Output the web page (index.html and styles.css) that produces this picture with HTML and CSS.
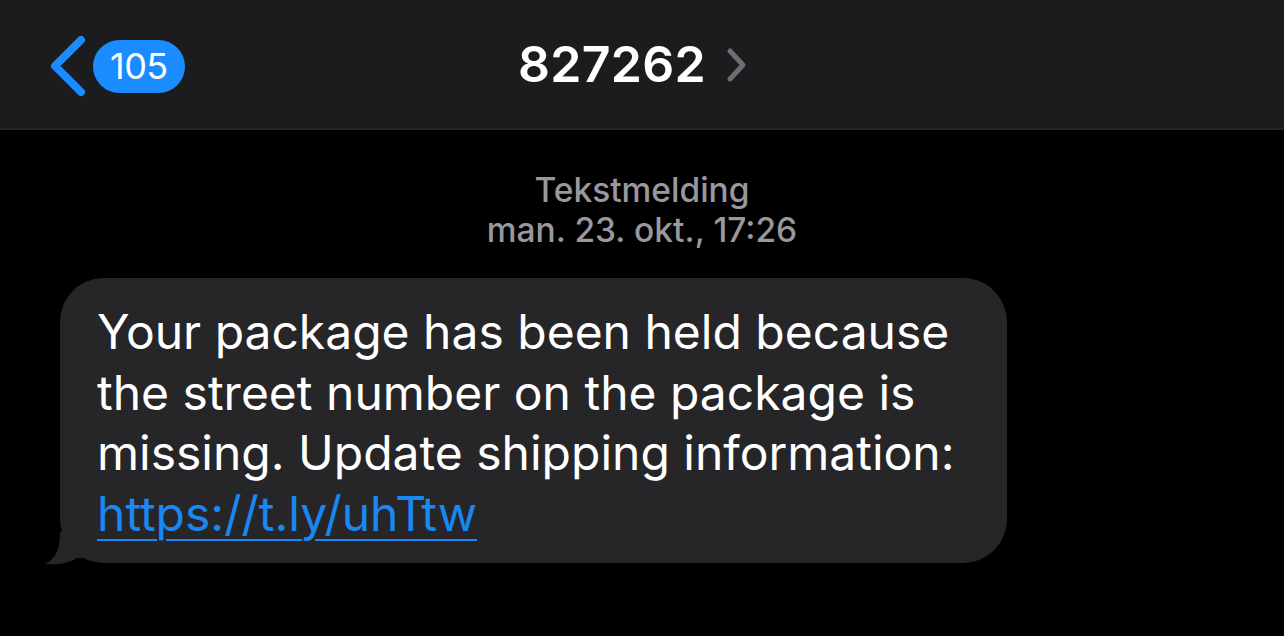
FILE: index.html
```html
<!DOCTYPE html>
<html lang="nb">
<head>
<meta charset="UTF-8" />
<meta name="viewport" content="width=device-width, initial-scale=1" />
<title>827262</title>
<link rel="stylesheet" href="styles.css">
</head>
<body>

<!-- Topplinje -->
<header class="topbar">
  <a class="back" href="#" aria-label="Tilbake">
    <svg class="back-chevron" width="40" height="62" viewBox="0 0 40 62" aria-hidden="true">
      <path d="M34 5 L8 31 L34 57" fill="none" stroke="#1a8cff" stroke-width="8" stroke-linecap="round" stroke-linejoin="round"/>
    </svg>
    <span class="badge">105</span>
  </a>
  <div class="contact">
    <span class="contact-name">827262</span>
    <svg class="contact-chevron" width="24" height="36" viewBox="0 0 24 36" aria-hidden="true">
      <path d="M5 4 L18 18 L5 32" fill="none" stroke="#6d6d72" stroke-width="5" stroke-linecap="round" stroke-linejoin="round"/>
    </svg>
  </div>
  <div></div>
</header>

<!-- Samtale -->
<main class="thread">
  <div class="meta">
    <div class="meta-kind">Tekstmelding</div>
    <div class="meta-date">man. 23. okt., 17:26</div>
  </div>

  <div class="bubble">
    <p>Your package has been held because the street number on the package is missing. Update shipping information: <a href="#">https://t.ly/uhTtw</a></p>
    <svg class="tail" width="40" height="34" viewBox="0 0 40 34" aria-hidden="true">
      <path d="M15 0 C15 16 12 26 0 32 C12 33.5 24 31 32 26 L40 26 L40 0 Z" fill="#262628"/>
    </svg>
  </div>
</main>

</body>
</html>
```

FILE: styles.css
```css
:root {
  --blue: #1a8cff;
  --link: #1b87f2;
  --bar: #1c1c1e;
  --bubble: #262628;
  --muted: #98989e;
}

body {
  margin: 0;
  background: #000;
  color: #fff;
  font-family: Inter, "Liberation Sans", sans-serif;
  height: 636px;
  overflow: hidden;
}

.topbar {
  height: 130px;
  background: var(--bar);
  border-bottom: 2px solid #262628;
  display: grid;
  grid-template-columns: 1fr auto 1fr;
  align-items: center;
  padding: 0 0 0 47px;
  box-sizing: border-box;
}

.back {
  display: flex;
  align-items: center;
  gap: 6px;
  text-decoration: none;
  margin-top: 4px;
}

.badge {
  background: var(--blue);
  color: #fff;
  font-size: 36px;
  line-height: 53px;
  height: 53px;
  padding: 0 17px;
  border-radius: 27px;
  letter-spacing: -0.5px;
}

.contact {
  display: flex;
  align-items: center;
  gap: 19px;
  margin-left: -64px;
}

.contact-name {
  font-size: 50px;
  font-weight: 600;
  letter-spacing: 0.3px;
}

.contact-chevron {
  margin-top: 2px;
}

.thread {
  padding-top: 40px;
}

.meta {
  text-align: center;
  color: var(--muted);
  font-size: 33.5px;
  line-height: 40px;
  font-weight: 500;
}

.bubble {
  position: relative;
  width: 947px;
  box-sizing: border-box;
  margin: 28px 0 0 60px;
  background: var(--bubble);
  border-radius: 44px;
  padding: 24px 12px 19px 37px;
}

.bubble p {
  margin: 0;
  font-size: 48px;
  line-height: 60.5px;
  position: relative;
  z-index: 1;
}

.bubble a {
  color: var(--link);
  text-decoration: underline;
  text-decoration-thickness: 2px;
  text-underline-offset: 8px;
}

.tail {
  position: absolute;
  left: -15px;
  bottom: -3px;
}
```
